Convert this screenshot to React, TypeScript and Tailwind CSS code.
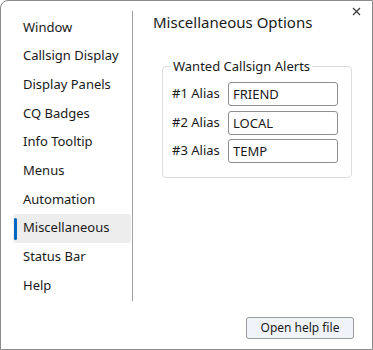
import { useState } from 'react'

const NAV_ITEMS = [
  'Window',
  'Callsign Display',
  'Display Panels',
  'CQ Badges',
  'Info Tooltip',
  'Menus',
  'Automation',
  'Miscellaneous',
  'Status Bar',
  'Help',
]

const ALIASES = [
  { label: '#1 Alias', value: 'FRIEND' },
  { label: '#2 Alias', value: 'LOCAL' },
  { label: '#3 Alias', value: 'TEMP' },
]

export default function App() {
  const [active, setActive] = useState('Miscellaneous')

  return (
    <div
      className="relative w-[373px] h-[350px] bg-white border border-[#8a8a8a] rounded-tl-[8px] overflow-hidden text-[#1a1a1a]"
      style={{ fontFamily: '"Segoe UI", "Noto Sans", sans-serif' }}
    >
      {/* close */}
      <button className="absolute right-[9px] top-[3px] w-[14px] h-[14px] flex items-center justify-center text-[#333]">
        <svg width="9" height="9" viewBox="0 0 9 9" fill="none">
          <path d="M1 1L8 8M8 1L1 8" stroke="currentColor" strokeWidth="1.1" />
        </svg>
      </button>

      <div className="flex h-full">
        {/* sidebar */}
        <nav className="w-[131px] shrink-0 pt-[12px] pl-[12px] pr-[1px] flex flex-col">
          {NAV_ITEMS.map((label) => {
            const isActive = label === active
            return (
              <button
                key={label}
                onClick={() => setActive(label)}
                className={`relative h-[28.7px] flex items-center pl-[10px] text-left text-[13px] rounded-[3px] ${
                  isActive ? 'bg-[#ededed]' : ''
                }`}
              >
                {isActive && (
                  <span className="absolute left-[1px] top-[4px] bottom-[3px] w-[3px] rounded-full bg-[#0067c0]" />
                )}
                {label}
              </button>
            )
          })}
        </nav>

        <div className="w-px bg-[#a0a0a0] mt-[10px] mb-[48px]" />

        {/* content */}
        <div className="flex-1 flex flex-col pl-[20px] pr-[19px]">
          <h1 className="mt-[10px] text-[15px] leading-[22px]">Miscellaneous Options</h1>

          <fieldset className="mt-[25px] ml-[9px] w-[190px] border border-[#dcdcdc] rounded-[4px] pl-[9px] pr-[12px] pb-[14px] pt-[2px]">
            <legend className="px-[2px] -ml-[1px] text-[13px] leading-[16px]">Wanted Callsign Alerts</legend>
            <div className="flex flex-col gap-[4.5px] mt-[6px]">
              {ALIASES.map(({ label, value }) => (
                <div key={label} className="flex items-center gap-[4px]">
                  <span className="w-[52px] text-[13px]">{label}</span>
                  <input
                    defaultValue={value}
                    className="w-[110px] h-[24px] px-[4px] border border-[#8f8f8f] rounded-[3px] text-[13px] outline-none"
                  />
                </div>
              ))}
            </div>
          </fieldset>

          <div className="mt-auto mb-[10px] flex justify-end">
            <button className="w-[108px] h-[22px] bg-[#f0f3f9] border border-[#9a9a9a] rounded-[3px] text-[12px] leading-none -mr-[1px]">
              Open help file
            </button>
          </div>
        </div>
      </div>
    </div>
  )
}
